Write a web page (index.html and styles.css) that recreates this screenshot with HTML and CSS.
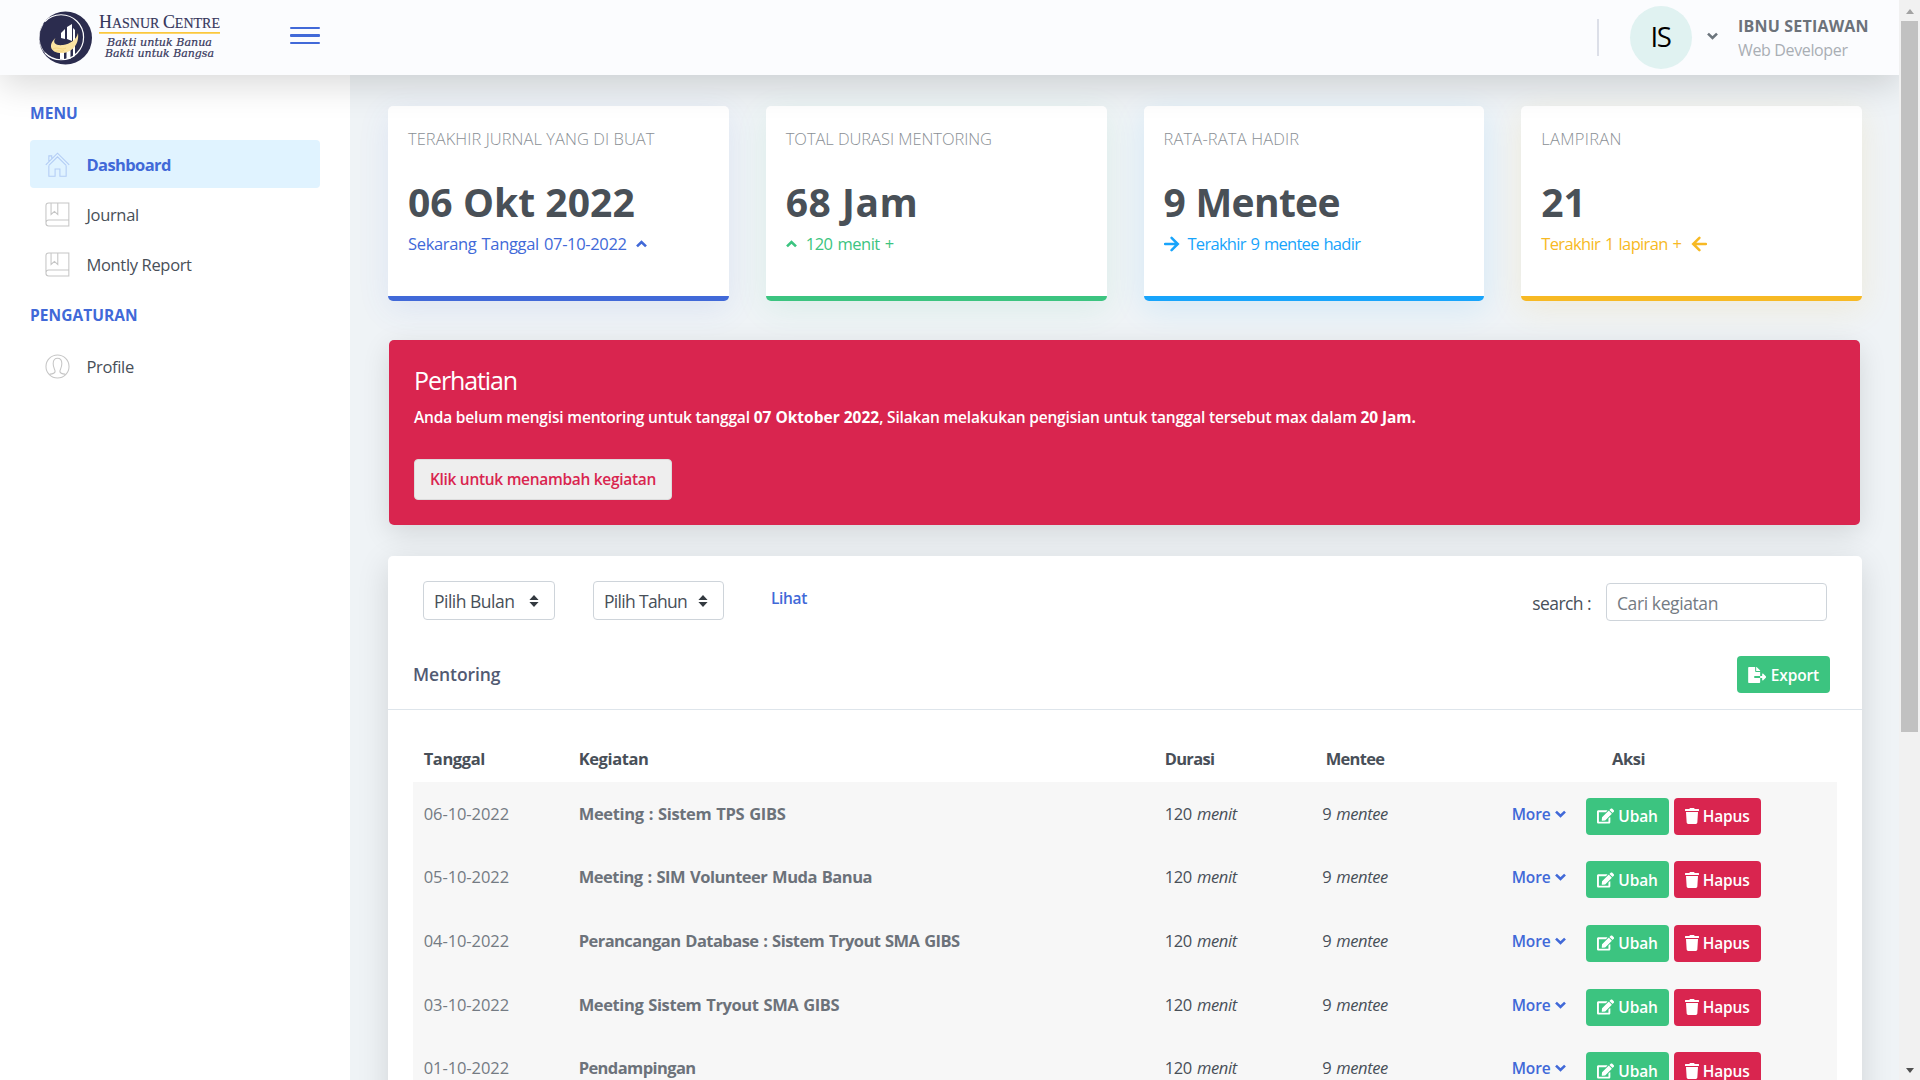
FILE: index.html
```
<!DOCTYPE html>
<html lang="id">
<head>
<meta charset="utf-8">
<title>Dashboard - Hasnur Centre</title>
<link rel="stylesheet" href="styles.css">
</head>
<body>
<svg class="sprite" aria-hidden="true">
  <symbol id="edit" viewBox="0 0 576 512"><path d="M402.6 83.2l90.2 90.2c3.8 3.8 3.8 10 0 13.8L274.4 405.6l-92.8 10.3c-12.4 1.4-22.9-9.1-21.5-21.5l10.3-92.8L388.8 83.2c3.8-3.8 10-3.8 13.8 0zm162-22.9l-48.8-48.8c-15.2-15.2-39.9-15.2-55.2 0l-35.4 35.4c-3.8 3.8-3.8 10 0 13.8l90.2 90.2c3.8 3.8 10 3.8 13.8 0l35.4-35.4c15.2-15.3 15.2-40 0-55.2zM384 346.2V448H64V128h229.8c3.2 0 6.2-1.3 8.5-3.5l40-40c7.6-7.6 2.2-20.5-8.5-20.5H48C21.5 64 0 85.5 0 112v352c0 26.5 21.5 48 48 48h352c26.5 0 48-21.5 48-48V306.2c0-10.7-12.9-16-20.5-8.5l-40 40c-2.2 2.3-3.5 5.3-3.5 8.5z"/></symbol>
  <symbol id="trash" viewBox="0 0 448 512"><path d="M432 32H312l-9.4-18.7A24 24 0 0 0 281.1 0H166.8a23.72 23.72 0 0 0-21.4 13.3L136 32H16A16 16 0 0 0 0 48v32a16 16 0 0 0 16 16h416a16 16 0 0 0 16-16V48a16 16 0 0 0-16-16zM53.2 467a48 48 0 0 0 47.9 45h245.8a48 48 0 0 0 47.9-45L416 128H32z"/></symbol>
  <symbol id="export" viewBox="0 0 576 512"><path d="M384 121.9c0-6.3-2.5-12.4-7-16.9L279.1 7c-4.5-4.5-10.6-7-17-7H256v128h128zM571 308l-95.7-96.4c-10.1-10.1-27.4-3-27.4 11.3V288h-64v64h64v65.2c0 14.3 17.3 21.4 27.4 11.3L571 332c6.6-6.6 6.6-17.4 0-24zm-379 28v-32c0-8.8 7.2-16 16-16h176V160H248c-13.2 0-24-10.8-24-24V0H24C10.7 0 0 10.7 0 24v464c0 13.3 10.7 24 24 24h336c13.3 0 24-10.7 24-24V352H208c-8.8 0-16-7.2-16-16z"/></symbol>
  <symbol id="down" viewBox="0 0 11 8"><path d="M1 1.6l4.5 4.4L10 1.6" fill="none" stroke="currentColor" stroke-width="2.6"/></symbol>
  <symbol id="up" viewBox="0 0 11 8"><path d="M1 6.4L5.5 2 10 6.4" fill="none" stroke="currentColor" stroke-width="2.6"/></symbol>
  <symbol id="right" viewBox="0 0 16 16"><path d="M1 8h12M7.600 1.800L13.800 8l-6.200 6.200" fill="none" stroke="currentColor" stroke-width="2.5" stroke-linecap="round"/></symbol>
  <symbol id="left" viewBox="0 0 16 16"><path d="M15 8H3M8.400 1.800L2.200 8l6.200 6.200" fill="none" stroke="currentColor" stroke-width="2.5" stroke-linecap="round"/></symbol>
  <symbol id="book" viewBox="0 0 26 26"><path d="M3.8 1h21v24h-21A2.8 2.8 0 0 1 1 22.200V3.800A2.8 2.8 0 0 1 3.800 1zM1 21.500a3 3 0 0 1 2.800-2.700h21M6.300 1v12l3.500-3.200 3.500 3.200V1" fill="none" stroke="currentColor" stroke-width="1.1"/></symbol>
</svg>

<header class="topbar">
  <svg class="logo" width="186" height="62" viewBox="0 0 186 62">
    <circle cx="28.500" cy="31" r="26.500" fill="#2b2c4e"/>
    <path d="M8 14.500A22.500 22.500 0 1 1 8 46" fill="none" stroke="#fff" stroke-width="1.2"/>
    <path d="M6 17A24 24 0 0 0 9 47" fill="none" stroke="#fff" stroke-width=".7"/>
    <path d="M24 31v-5l4-4v10M30 32V20l5-3v17M23 50v-5h4v7h-4zM29.500 52v-8l4-1v9zM36 50V21l2 2v26z" fill="#fff"/>
    <path d="M18.500 31c-8 7-5 15 6 15 10 0 18-8 16.500-20-1.500 7-8 11-15 12-7 .8-11-2-7.500-7z" fill="#fbe3a2"/>
    <path d="M16 42c5-3 8 2 13-1M18 44.500c4-2 6 1 9-1" fill="none" stroke="#f4cf74" stroke-width=".8"/>
    <text class="logo-name" x="62" y="21.200" textLength="121" lengthAdjust="spacingAndGlyphs"><tspan class="cap">H</tspan>ASNUR <tspan class="cap">C</tspan>ENTRE</text>
    <path d="M62 25.800h121" stroke="#fbc83c" stroke-width="1.8"/>
    <text class="logo-tag" x="70" y="38.800" textLength="105" lengthAdjust="spacingAndGlyphs">Bakti untuk Banua</text>
    <text class="logo-tag" x="68" y="49.800" textLength="109" lengthAdjust="spacingAndGlyphs">Bakti untuk Bangsa</text>
  </svg>
  <div class="burger"><i></i><i></i><i></i></div>
  <div class="user">
    <span class="divider"></span>
    <span class="avatar">IS</span>
    <svg class="chev"><use href="#down"/></svg>
    <div class="who"><b>IBNU SETIAWAN</b><span>Web Developer</span></div>
  </div>
</header>

<div class="scrollbar"><i class="arrow-up"></i><span class="thumb"></span><i class="arrow-down"></i></div>

<div class="shell">
  <nav class="sidebar">
    <h6>MENU</h6>
    <a class="item active"><svg viewBox="0 0 26 26"><path d="M.8 13.500L13 1.300l12.200 12.200M4 14v11.200h6.500v-7.500h5v7.500H22V14M4 10.300V4h3v3.300M4 14l9-9 9 9" fill="none" stroke="currentColor" stroke-width="1.1"/></svg><span>Dashboard</span></a>
    <a class="item"><svg><use href="#book"/></svg><span>Journal</span></a>
    <a class="item"><svg><use href="#book"/></svg><span>Montly Report</span></a>
    <h6 class="second">PENGATURAN</h6>
    <a class="item"><svg viewBox="0 0 26 26"><circle cx="13" cy="13" r="12" fill="none" stroke="currentColor" stroke-width="1.1"/><path d="M4.500 21.500c2-1.500 6 0 6-3.500 0-2-2-3-2-8 0-4 2-5.500 4.500-5.500s4.500 1.500 4.500 5.500c0 5-2 6-2 8 0 3.500 4 2 6 3.500" fill="none" stroke="currentColor" stroke-width="1.1"/></svg><span>Profile</span></a>
  </nav>

  <main>
    <section class="stats">
      <article class="stat blue"><p class="label">TERAKHIR JURNAL YANG DI BUAT</p><p class="num">06 Okt 2022</p><p class="sub s1"><span>Sekarang Tanggal 07-10-2022</span><svg class="tick"><use href="#up"/></svg></p></article>
      <article class="stat green"><p class="label l2">TOTAL DURASI MENTORING</p><p class="num n2">68 Jam</p><p class="sub"><svg class="tick"><use href="#up"/></svg><span>120 menit +</span></p></article>
      <article class="stat sky"><p class="label l3">RATA-RATA HADIR</p><p class="num n3">9 Mentee</p><p class="sub s3"><svg class="arrow"><use href="#right"/></svg><span>Terakhir 9 mentee hadir</span></p></article>
      <article class="stat amber"><p class="label l4">LAMPIRAN</p><p class="num">21</p><p class="sub s4"><span>Terakhir 1 lapiran +</span><svg class="arrow"><use href="#left"/></svg></p></article>
    </section>

    <section class="alert">
      <h4>Perhatian</h4>
      <p>Anda belum mengisi mentoring untuk tanggal <b>07 Oktober 2022</b>, Silakan melakukan pengisian untuk tanggal tersebut max dalam <b>20 Jam.</b></p>
      <a class="add">Klik untuk menambah kegiatan</a>
    </section>

    <section class="panel">
      <div class="filters">
        <div class="select month"><span>Pilih Bulan</span><svg viewBox="0 0 10 12"><path d="M5 0l4.600 5H.4zM5 12L.4 7h9.200z"/></svg></div>
        <div class="select year"><span>Pilih Tahun</span><svg viewBox="0 0 10 12"><path d="M5 0l4.600 5H.4zM5 12L.4 7h9.200z"/></svg></div>
        <a class="view">Lihat</a>
        <label>search :</label>
        <div class="search">Cari kegiatan</div>
      </div>
      <div class="panel-head"><h5>Mentoring</h5><a class="btn ok"><svg class="wide"><use href="#export"/></svg>Export</a></div>
      <table>
        <colgroup><col class="c1"><col class="c2"><col class="c3"><col class="c4"><col></colgroup>
        <thead><tr><th>Tanggal</th><th>Kegiatan</th><th class="tight">Durasi</th><th class="tight mid">Mentee</th><th class="aksi">Aksi</th></tr></thead>
        <tbody>
          <tr><td class="date">06-10-2022</td><td class="name w1">Meeting : Sistem TPS GIBS</td><td>120 <i>menit</i></td><td class="mid">9 <i>mentee</i></td><td><div class="acts"><a class="more">More<svg><use href="#down"/></svg></a><a class="btn ok"><svg class="wide"><use href="#edit"/></svg>Ubah</a><a class="btn bad"><svg><use href="#trash"/></svg>Hapus</a></div></td></tr>
          <tr><td class="date">05-10-2022</td><td class="name">Meeting : SIM Volunteer Muda Banua</td><td>120 <i>menit</i></td><td class="mid">9 <i>mentee</i></td><td><div class="acts"><a class="more">More<svg><use href="#down"/></svg></a><a class="btn ok"><svg class="wide"><use href="#edit"/></svg>Ubah</a><a class="btn bad"><svg><use href="#trash"/></svg>Hapus</a></div></td></tr>
          <tr><td class="date">04-10-2022</td><td class="name w3">Perancangan Database : Sistem Tryout SMA GIBS</td><td>120 <i>menit</i></td><td class="mid">9 <i>mentee</i></td><td><div class="acts"><a class="more">More<svg><use href="#down"/></svg></a><a class="btn ok"><svg class="wide"><use href="#edit"/></svg>Ubah</a><a class="btn bad"><svg><use href="#trash"/></svg>Hapus</a></div></td></tr>
          <tr><td class="date">03-10-2022</td><td class="name w4">Meeting Sistem Tryout SMA GIBS</td><td>120 <i>menit</i></td><td class="mid">9 <i>mentee</i></td><td><div class="acts"><a class="more">More<svg><use href="#down"/></svg></a><a class="btn ok"><svg class="wide"><use href="#edit"/></svg>Ubah</a><a class="btn bad"><svg><use href="#trash"/></svg>Hapus</a></div></td></tr>
          <tr><td class="date">01-10-2022</td><td class="name w5">Pendampingan</td><td>120 <i>menit</i></td><td class="mid">9 <i>mentee</i></td><td><div class="acts"><a class="more">More<svg><use href="#down"/></svg></a><a class="btn ok"><svg class="wide"><use href="#edit"/></svg>Ubah</a><a class="btn bad"><svg><use href="#trash"/></svg>Hapus</a></div></td></tr>
        </tbody>
      </table>
    </section>
  </main>
</div>
</body>
</html>
```
FILE: styles.css
```
* { box-sizing: border-box; }
html, body { height: 100%; }
body {
  margin: 0;
  overflow: hidden;
  display: grid;
  grid-template: 75px 1fr / 1fr 21px;
  background: #eff3f6;
  color: #484f58;
  font: 400 16.5px/24px "Open Sans", "Noto Sans", sans-serif;
}
p, h4, h5, h6 { margin: 0; }
svg { display: block; fill: currentColor; }
.sprite { position: absolute; width: 0; height: 0; }

.topbar {
  position: relative;
  z-index: 2;
  display: flex;
  align-items: center;
  padding: 0 30px 0 37px;
  background: #fbfcfe;
  box-shadow: 0 10px 35px rgba(0, 0, 0, .15);
}
.logo-name { font: 14.5px "Liberation Serif", serif; fill: #34355a; stroke: #34355a; stroke-width: .15; }
.logo-name .cap { font-size: 18.5px; }
.logo-tag { font: italic 11px "DejaVu Serif", "Liberation Serif", serif; fill: #34355a; stroke: #34355a; stroke-width: .2; }
.burger { display: flex; flex-direction: column; gap: 5px; margin: -4px 0 0 67px; }
.burger i { width: 30px; height: 2.5px; background: #4169d8; border-radius: 1px; }
.user { display: flex; align-items: center; margin-left: auto; }
.divider { width: 2px; height: 37px; background: #dcdfe8; }
.avatar {
  width: 62px; height: 63px; margin-left: 31px;
  border-radius: 50%;
  background: #e0f2f1;
  color: #000;
  font-size: 27.5px; font-weight: 370; line-height: 62px;
  letter-spacing: -1.3px; text-indent: -1px;
  text-align: center;
}
.chev { width: 11px; height: 8px; margin: -3px 20px 0 15px; color: #6c757d; }
.who { width: 131px; display: flex; flex-direction: column; white-space: nowrap; margin-top: 1px; }
.who b { font-size: 16px; color: #6c727a; letter-spacing: .2px; }
.who span { font-size: 16px; letter-spacing: -.36px; color: #a9aeb4; }

.scrollbar {
  position: relative;
  z-index: 3;
  grid-area: 1 / 2 / 3 / 3;
  display: flex;
  flex-direction: column;
  align-items: center;
  background: #f1f1f1;
  padding: 9px 0 7px;
}
.arrow-up, .arrow-down { border: 4.5px solid transparent; border-top: 0; border-bottom: 5px solid #a3a3a3; }
.arrow-down { border-top: 5px solid #505050; border-bottom: 0; margin-top: auto; }
.thumb { width: 17px; height: 711px; margin-top: 7px; background: #c1c1c1; }

.shell { grid-area: 2 / 1; display: grid; grid-template-columns: 350px 1fr; min-height: 0; }
.sidebar { background: #fff; margin-bottom: 6px; padding: 27px 30px; }
.sidebar h6 { font-size: 15.5px; line-height: 22px; font-weight: 700; letter-spacing: .05px; color: #4169d8; margin-bottom: 16px; }
.sidebar .second { margin-top: 16px; }
.item { display: flex; align-items: center; height: 48px; margin-bottom: 2px; padding-left: 15px; border-radius: 4px; letter-spacing: -.34px; }
.item svg { width: 25px; height: 25px; margin-right: 16.5px; color: #c6c6c6; }
.item span { padding-top: 2px; }
.active { background: #e0f3ff; color: #4169d8; font-weight: 700; letter-spacing: -.62px; }
.active svg { color: #b3cdf5; }

main { padding: 31px 37px 0 38px; min-width: 0; }
.stats { display: grid; grid-template-columns: repeat(4, 1fr); gap: 37px; }
.stat { height: 195px; padding: 21px 0 0 20px; background: #fff; border-radius: 5px; border-bottom: 5px solid; white-space: nowrap; }
.blue { color: #4169d8; box-shadow: 0 8px 32px rgba(65, 105, 216, .1); }
.green { color: #3cc480; box-shadow: 0 8px 32px rgba(60, 196, 128, .1); }
.sky { color: #18a4fb; box-shadow: 0 8px 32px rgba(24, 164, 251, .12); }
.amber { color: #f7b924; box-shadow: 0 8px 32px rgba(247, 185, 36, .12); }
.label { font-weight: 300; color: #8a8f95; letter-spacing: .05px; }
.l2 { letter-spacing: -.06px; }
.l3 { letter-spacing: .15px; }
.l4 { letter-spacing: .3px; }
.num { font-size: 39px; font-weight: 700; line-height: 48px; margin: 27px 0 6px; color: #495057; letter-spacing: .05px; }
.n2 { letter-spacing: .5px; }
.n3 { letter-spacing: -.7px; word-spacing: 1px; }
.sub { display: flex; align-items: center; letter-spacing: -.5px; word-spacing: 1.2px; }
.s1 { letter-spacing: -.34px; }
.s3 { letter-spacing: -.72px; }
.s4 { letter-spacing: -.64px; }
.tick { width: 11px; height: 8px; }
.arrow { width: 16px; height: 16px; margin-right: 8px; }
.s1 .tick { margin-left: 9px; }
.tick + span { margin-left: 9px; }
.s4 .arrow { margin-left: 10px; }

.alert {
  margin: 39px 2px 31px 1px; height: 185px; padding: 24px 25px;
  border-radius: 5px;
  background: #d9254f; color: #fff;
  box-shadow: 0 8px 28px rgba(0, 0, 0, .12);
}
.alert h4 { font-size: 25px; font-weight: 400; line-height: 32px; letter-spacing: -1.1px; }
.alert p { margin-top: 9px; font-size: 15.5px; font-weight: 600; letter-spacing: -.18px; white-space: nowrap; }
.alert b { font-weight: 700; letter-spacing: 0; }
.alert b:last-child { letter-spacing: -.1px; }
.add {
  display: inline-block; margin-top: 30px; padding: 7px 0; width: 258px; height: 41px;
  background: #eee; border: 1px solid #dcdcdc; border-radius: 4px;
  color: #d9254f; font-size: 15.5px; font-weight: 600; letter-spacing: -.3px; text-align: center;
}

.panel { height: 560px; background: #fff; border-radius: 5px; box-shadow: 0 8px 32px rgba(0, 0, 0, .13); }
.filters { display: flex; align-items: flex-start; padding: 25px 35px 0; height: 100px; }
.select {
  display: flex; align-items: center; width: 132px; height: 39px; padding: 1px 15px 0 10px;
  border: 1px solid #ced4da; border-radius: 4px;
  font-size: 17.5px; font-weight: 370; letter-spacing: -.5px;
}
.select svg { width: 10px; height: 12px; margin: -1px 0 0 auto; fill: #343a40; }
.year { margin-left: 38px; width: 131px; letter-spacing: -.68px; }
.view { margin: 5px 0 0 47px; color: #4169d8; font-size: 15.5px; font-weight: 600; letter-spacing: -.35px; }
.filters label { margin: 10px 15px 0 auto; font-size: 17.5px; font-weight: 370; letter-spacing: -.58px; }
.search {
  width: 221px; height: 38px; margin-top: 2px; padding-left: 10px;
  border: 1px solid #ced4da; border-radius: 4px;
  color: #747b83; font-size: 17.5px; line-height: 39px; letter-spacing: -.4px;
}
.panel-head { display: flex; align-items: flex-start; justify-content: space-between; height: 54px; padding: 0 32px 0 25px; border-bottom: 1px solid #dee5eb; }
.panel-head h5 { font-size: 17.5px; font-weight: 650; line-height: 36px; letter-spacing: -.08px; color: #515a72; }
.btn { display: flex; align-items: center; height: 37px; border-radius: 4px; padding: 0 11px; color: #fff; font-size: 15.5px; font-weight: 600; letter-spacing: -.16px; }
.btn svg { width: 14px; height: 16px; margin-right: 4px; }
.btn .wide { width: 18.5px; margin-right: 4.5px; }
.panel-head .btn { width: 93px; }
.ok { background: #3cc480; }
.bad { background: #d9254f; margin-left: 5px; width: 87px; }

table { table-layout: fixed; width: 1424px; margin: 28px 25px 0; border-collapse: collapse; }
.c1 { width: 155px; }
.c2 { width: 586px; }
.c3 { width: 96px; }
.c4 { width: 210px; }
th, td { padding: 0 0 0 10.7px; text-align: left; white-space: nowrap; }
th { height: 44px; padding-bottom: 2px; letter-spacing: -.4px; }
.tight { letter-spacing: -.7px; }
th.mid, td.mid { padding-left: 0; text-align: center; }
.aksi { padding-left: 152px; }
tbody { background: #f7f7f7; }
td { height: 63.6px; letter-spacing: -.35px; word-spacing: 1px; }
td.mid { letter-spacing: -.42px; word-spacing: 1.2px; }
.date { letter-spacing: -.08px; color: #747b83; }
.name { font-weight: 700; letter-spacing: -.49px; color: #6c727a; }
.w1 { letter-spacing: -.34px; }
.w3 { letter-spacing: -.55px; }
.w4 { letter-spacing: -.39px; }
.w5 { letter-spacing: -.6px; }
.acts { display: flex; align-items: center; padding: 5px 0 0 41px; }
.more { display: flex; align-items: center; width: 74px; margin-top: -5px; color: #4169d8; font-size: 15.5px; font-weight: 600; letter-spacing: -.12px; }
.more svg { width: 11px; height: 8px; margin: 0 0 0 4px; }
.acts .ok { width: 83px; }
```
